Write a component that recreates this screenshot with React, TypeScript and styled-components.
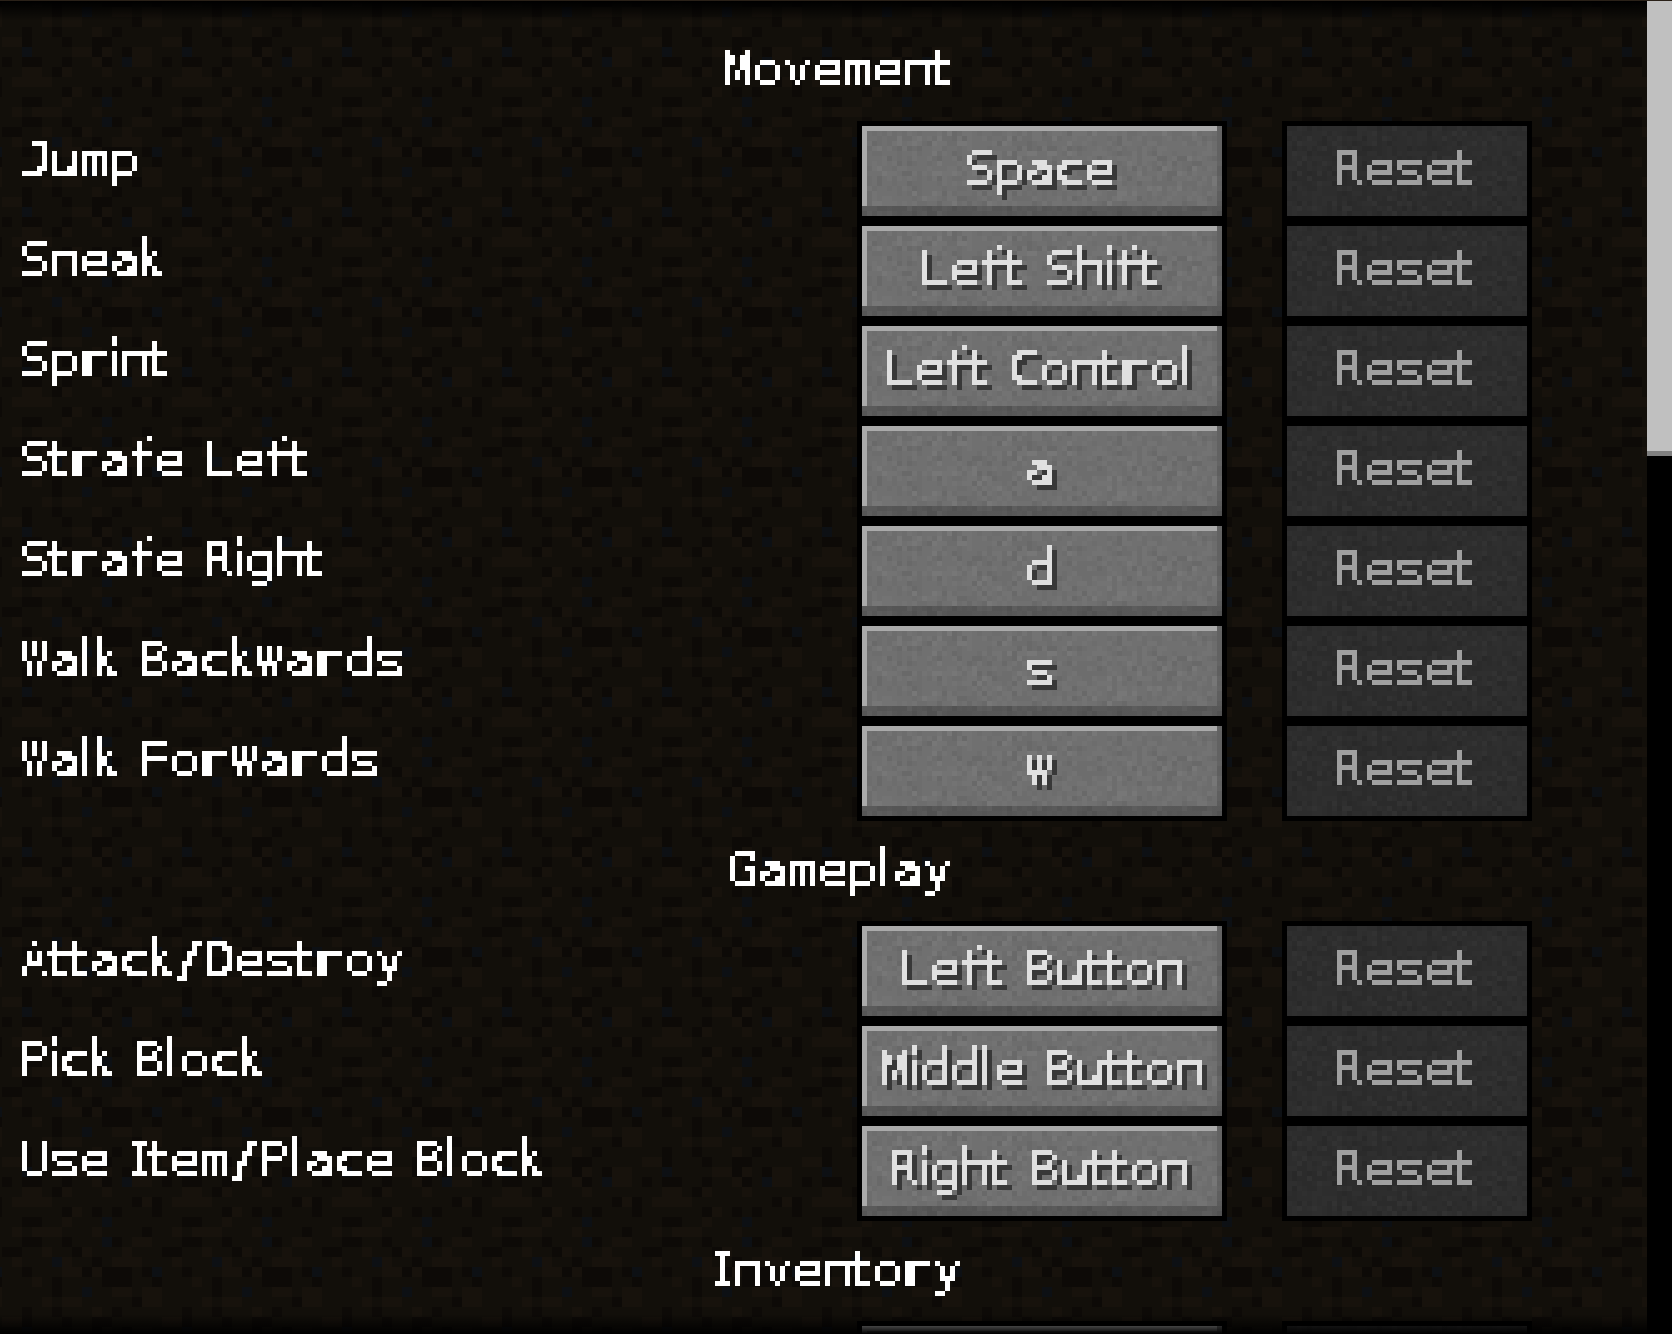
import React from "react";
import styled, { createGlobalStyle } from "styled-components";

const UNIT = 5;

// dirt tile, 16x16 texels read off the reference
const DIRT_ROWS = [
  "+...+...--..+..-",
  ".-.+++...+...#+.",
  "-+---.-#..-...++",
  "..---..-...+.-..",
  "#..++.++.....-..",
  ".....-++....+.++",
  ".+.-......-..-..",
  ".--.....++-...-.",
  "+-+.-++...#....+",
  ".+-.#++.-.--..-.",
  "..+.......++.-+.",
  ".....-+-.++++...",
  ".-.-...-......-+",
  "..#.......--..+.",
  ".+....-..+.+++..",
  "..#-.++...--..-.",
];
const DIRT_SHADES: Record<string, string> = {
  ".": "#120f0a",
  "+": "#17120c",
  "-": "#0d0a07",
  "#": "#0d1014",
};

const svgUrl = (w: number, h: number, body: string) =>
  `url("data:image/svg+xml,${encodeURIComponent(
    `<svg xmlns='http://www.w3.org/2000/svg' width='${w}' height='${h}' viewBox='0 0 ${w} ${h}' shape-rendering='crispEdges'>${body}</svg>`
  )}")`;

const dirtTile = svgUrl(
  16,
  16,
  DIRT_ROWS.map((row, y) =>
    row
      .split("")
      .map((c, x) => `<rect x='${x}' y='${y}' width='1' height='1' fill='${DIRT_SHADES[c]}'/>`)
      .join("")
  ).join("")
);

// button stone: same noise on every button, so a fixed seed
const stoneNoise = (shades: string[], columns: number, seed: number) => {
  let s = seed;
  const next = () => {
    s = (s * 1664525 + 1013904223) >>> 0;
    return (s >>> 8) / 16777216;
  };
  const paths: string[] = shades.map(() => "");
  for (let y = 0; y < 18; y++) {
    for (let x = 0; x < columns; x++) {
      const r = (next() + next()) / 2;
      const i = Math.min(shades.length - 1, Math.floor(r * shades.length));
      paths[i] += `M${x} ${y}h1v1h-1z`;
    }
  }
  return svgUrl(columns, 18, paths.map((d, i) => `<path fill='${shades[i]}' d='${d}'/>`).join(""));
};

const stoneActive = stoneNoise(["#696969", "#6d6d6d", "#707070", "#737373", "#777777"], 72, 7);
const stoneDisabled = stoneNoise(["#292929", "#2b2b2b", "#2d2d2d", "#2f2f2f", "#323232"], 48, 11);

const NARROW_ADVANCE: Record<string, number> = { I: 4, f: 5, i: 2, k: 5, l: 3, t: 4, " ": 4 };
const INK_COLUMNS: Record<string, number> = { I: 3, f: 4, i: 1, k: 4, l: 1, t: 3.8 };
const MONO_GLYPHS = "IJ";
const HEAVY_GLYPHS = "wW";
// t has its stem on the first column, the left of its bar falls outside the cell
const NUDGE: Record<string, number> = { t: -5 };

const advance = (ch: string) => NARROW_ADVANCE[ch] ?? 6;
const textUnits = (text: string) => text.split("").reduce((sum, ch) => sum + advance(ch), 0);

const FONT_SIZE = 48;
const STROKE = 1;
const HEAVY_STROKE = 4;
const ruler = document.createElement("canvas").getContext("2d")!;

// squeeze each letter into its own cell of the 5px grid
const fitGlyph = (ch: string) => {
  if (ch === " ") return undefined;
  const stroke = HEAVY_GLYPHS.includes(ch) ? HEAVY_STROKE : STROKE;
  ruler.font = `${FONT_SIZE}px ${MONO_GLYPHS.includes(ch) ? '"DejaVu Sans Mono"' : '"DejaVu Sans"'}`;
  const m = ruler.measureText(ch);
  const left = -m.actualBoundingBoxLeft - stroke / 2;
  const ink = m.actualBoundingBoxRight + m.actualBoundingBoxLeft + stroke;
  const columns = INK_COLUMNS[ch] ?? advance(ch) - 1;
  const scale = (columns * UNIT) / ink;
  const shift = -left * scale + (NUDGE[ch] ?? 0);
  return `translateX(${shift.toFixed(2)}px) scaleX(${scale.toFixed(3)})`;
};

const GlobalStyle = createGlobalStyle`
  html, body {
    margin: 0;
    padding: 0;
    background: #000;
  }
`;

const Screen = styled.div`
  position: relative;
  display: flex;
  width: 1672px;
  height: 1334px;
  overflow: hidden;
  background: ${dirtTile} 82px 127px / 160px 160px;

  &::before,
  &::after {
    content: "";
    position: absolute;
    left: 0;
    width: 1647px;
    height: 20px;
    z-index: 2;
    pointer-events: none;
  }
  &::before {
    top: 1px;
    background: linear-gradient(#000, transparent);
  }
  &::after {
    bottom: 0;
    background: linear-gradient(transparent, #000);
  }
`;

const TopEdge = styled.div`
  position: absolute;
  top: 0;
  left: 0;
  right: 0;
  height: 1px;
  background: #2a2118;
  z-index: 3;
`;

const List = styled.div`
  flex: 1;
  display: flex;
  flex-direction: column;
  padding-top: 21px;
`;

const SectionHeader = styled.div<{ $offset: number }>`
  height: 100px;
  flex-shrink: 0;
  padding-top: ${({ $offset }) => $offset}px;
  box-sizing: border-box;
`;

const Row = styled.div`
  display: flex;
  height: 100px;
  flex-shrink: 0;
`;

const LabelCell = styled.div`
  width: 857px;
  padding: 20px 0 0 22px;
  box-sizing: border-box;
`;

const Frame = styled.div<{ $width: number }>`
  width: ${({ $width }) => $width}px;
  border: 5px solid #000;
  box-sizing: border-box;
  margin-right: 55px;
`;

const KeyFace = styled.div`
  height: 90px;
  padding-top: 24px;
  box-sizing: border-box;
  background:
    linear-gradient(#aaaaaa, #aaaaaa) 0 0 / 355px 5px no-repeat,
    linear-gradient(#aaaaaa, #aaaaaa) 0 0 / 5px 80px no-repeat,
    linear-gradient(rgba(0, 0, 0, 0.22), rgba(0, 0, 0, 0.22)) 0 100% / 100% 10px no-repeat,
    linear-gradient(rgba(0, 0, 0, 0.13), rgba(0, 0, 0, 0.13)) 100% 0 / 5px 80px no-repeat,
    ${stoneActive} 0 0 / 360px 90px;
`;

const ResetFace = styled.div`
  height: 90px;
  padding-top: 24px;
  box-sizing: border-box;
  background: ${stoneDisabled} 0 0 / 240px 90px;
`;

const Scrollbar = styled.div`
  width: 25px;
  flex-shrink: 0;
  background: #000;
  padding-top: 1px;
  box-sizing: border-box;
`;

const Thumb = styled.div`
  height: 455px;
  background: #c0c0c0;
  border-bottom: 5px solid #808080;
  box-sizing: border-box;
`;

const TextLine = styled.div<{ $color: string; $shadow?: boolean }>`
  display: flex;
  height: 50px;
  color: ${({ $color }) => $color};
  filter: ${({ $shadow }) => ($shadow ? "url(#pixelShadow)" : "url(#pixel)")};
  font-size: ${FONT_SIZE}px;
  line-height: 36px;
  white-space: pre;
`;

const GlyphCell = styled.span`
  display: block;
  flex-shrink: 0;
  height: 50px;
`;

const Glyph = styled.span<{ $mono: boolean; $heavy: boolean }>`
  display: inline-block;
  transform-origin: 0 50%;
  font-family: ${({ $mono }) => ($mono ? '"DejaVu Sans Mono"' : '"DejaVu Sans"')}, sans-serif;
  -webkit-text-stroke: ${({ $heavy }) => ($heavy ? HEAVY_STROKE : STROKE)}px currentColor;
`;

const HiddenDefs = styled.svg`
  position: absolute;
  width: 0;
  height: 0;
`;

type PixelTextProps = {
  text: string;
  color: string;
  shadow?: boolean;
  center?: number;
};

const PixelText = ({ text, color, shadow, center }: PixelTextProps) => {
  const units = textUnits(text);
  const indent = center === undefined ? 0 : (center - Math.floor(units / 2)) * UNIT;
  return (
    <TextLine
      $color={color}
      $shadow={shadow}
      style={{ marginLeft: indent, width: (units + 1) * UNIT }}
    >
      {text.split("").map((ch, i) => (
        <GlyphCell key={i} style={{ width: advance(ch) * UNIT }}>
          <Glyph
            $mono={MONO_GLYPHS.includes(ch)}
            $heavy={HEAVY_GLYPHS.includes(ch)}
            style={{ transform: fitGlyph(ch) }}
          >
            {ch}
          </Glyph>
        </GlyphCell>
      ))}
    </TextLine>
  );
};

const PixelFilters = () => (
  <HiddenDefs aria-hidden="true">
    <defs>
      <filter id="pixel" x="0" y="0" width="100%" height="100%" colorInterpolationFilters="sRGB">
        <feFlood x="2" y="2" width="1" height="1" floodColor="#000" />
        <feComposite width="5" height="5" />
        <feTile result="grid" />
        <feComposite in="SourceGraphic" in2="grid" operator="in" />
        <feComponentTransfer>
          <feFuncA type="discrete" tableValues="0 1" />
        </feComponentTransfer>
        <feMorphology operator="dilate" radius="2" />
      </filter>
      <filter id="pixelShadow" x="0" y="0" width="100%" height="100%" colorInterpolationFilters="sRGB">
        <feFlood x="2" y="2" width="1" height="1" floodColor="#000" />
        <feComposite width="5" height="5" />
        <feTile result="grid" />
        <feComposite in="SourceGraphic" in2="grid" operator="in" />
        <feComponentTransfer>
          <feFuncA type="discrete" tableValues="0 1" />
        </feComponentTransfer>
        <feMorphology operator="dilate" radius="2" result="cells" />
        <feOffset dx="5" dy="5" result="moved" />
        <feFlood floodColor="#383838" />
        <feComposite in2="moved" operator="in" result="shade" />
        <feMerge>
          <feMergeNode in="shade" />
          <feMergeNode in="cells" />
        </feMerge>
      </filter>
    </defs>
  </HiddenDefs>
);

const KeyRow = ({ label, keyName }: { label?: string; keyName?: string }) => (
  <Row>
    <LabelCell>{label && <PixelText text={label} color="#ffffff" />}</LabelCell>
    <Frame $width={370}>
      <KeyFace>{keyName && <PixelText text={keyName} color="#e0e0e0" shadow center={36} />}</KeyFace>
    </Frame>
    <Frame $width={250}>
      <ResetFace>{label && <PixelText text="Reset" color="#a0a0a0" center={24} />}</ResetFace>
    </Frame>
  </Row>
);

const SECTIONS = [
  {
    title: "Movement",
    offset: 29,
    rows: [
      ["Jump", "Space"],
      ["Sneak", "Left Shift"],
      ["Sprint", "Left Control"],
      ["Strafe Left", "a"],
      ["Strafe Right", "d"],
      ["Walk Backwards", "s"],
      ["Walk Forwards", "w"],
    ],
  },
  {
    title: "Gameplay",
    offset: 30,
    rows: [
      ["Attack/Destroy", "Left Button"],
      ["Pick Block", "Middle Button"],
      ["Use Item/Place Block", "Right Button"],
    ],
  },
  { title: "Inventory", offset: 30, rows: [["", ""]] },
];

const App = () => (
  <>
    <GlobalStyle />
    <PixelFilters />
    <Screen>
      <TopEdge />
      <List>
        {SECTIONS.map((section) => (
          <React.Fragment key={section.title}>
            <SectionHeader $offset={section.offset}>
              <PixelText text={section.title} color="#ffffff" center={168} />
            </SectionHeader>
            {section.rows.map(([label, keyName], i) => (
              <KeyRow key={i} label={label} keyName={keyName} />
            ))}
          </React.Fragment>
        ))}
      </List>
      <Scrollbar>
        <Thumb />
      </Scrollbar>
    </Screen>
  </>
);

export default App;
